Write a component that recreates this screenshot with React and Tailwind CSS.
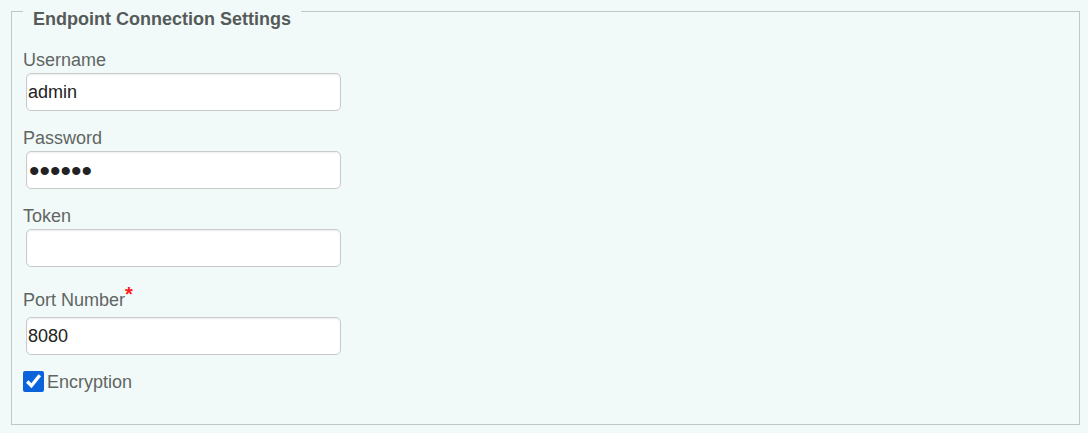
import { useState } from 'react'

function Field({ label, required, children, labelClass = 'pt-[2px] mb-[3px]' }) {
    return (
        <div className="mb-[15px]">
            <label className={`block text-[18px] leading-[20px] text-[#5f6563] ${labelClass}`}>
                {label}
                {required && <span className="relative -top-[5px] text-[20px] font-bold text-[#ff1a1a]">*</span>}
            </label>
            {children}
        </div>
    )
}

const inputClass =
    'ml-[3px] block h-[38px] w-[315px] rounded-[5px] border border-[#cacaca] bg-white px-[1px] text-[18px] text-[#222] shadow-[inset_0_1px_2px_rgba(0,0,0,0.07)] outline-none'

export default function App() {
    const [username, setUsername] = useState('admin')
    const [password, setPassword] = useState('secret')
    const [token, setToken] = useState('')
    const [port, setPort] = useState('8080')
    const [encrypt, setEncrypt] = useState(true)

    return (
        <div className="min-h-screen bg-[#f2faf9] pl-[11px] pr-[8px] pb-[8px] font-['Liberation_Sans',Arial,sans-serif]">
            <fieldset className="h-[425px] border border-[#c2c6c5] pl-[11px] pt-[26px]">
                <legend className="h-[22px] px-[10px] pt-[10px] text-[18px] font-bold leading-[18px] text-[#555b59]">
                    Endpoint Connection Settings
                </legend>
                <Field label="Username">
                    <input
                        className={inputClass}
                        value={username}
                        onChange={(e) => setUsername(e.target.value)}
                    />
                </Field>
                <Field label="Password">
                    <input
                        type="password"
                        className={`${inputClass} !text-[30px] !px-[2px]`}
                        value={password}
                        onChange={(e) => setPassword(e.target.value)}
                    />
                </Field>
                <Field label="Token">
                    <input
                        className={inputClass}
                        value={token}
                        onChange={(e) => setToken(e.target.value)}
                    />
                </Field>
                <Field label="Port Number" required labelClass="pt-[7px] mb-[7px]">
                    <input
                        className={inputClass}
                        value={port}
                        onChange={(e) => setPort(e.target.value)}
                    />
                </Field>
                <label className="mt-[16px] flex items-center text-[18px] leading-[20px] text-[#5f6563]">
                    <input
                        type="checkbox"
                        className="m-0 mr-[3px] h-[21px] w-[21px] accent-[#0b63dc]"
                        checked={encrypt}
                        onChange={(e) => setEncrypt(e.target.checked)}
                    />
                    Encryption
                </label>
            </fieldset>
        </div>
    )
}
